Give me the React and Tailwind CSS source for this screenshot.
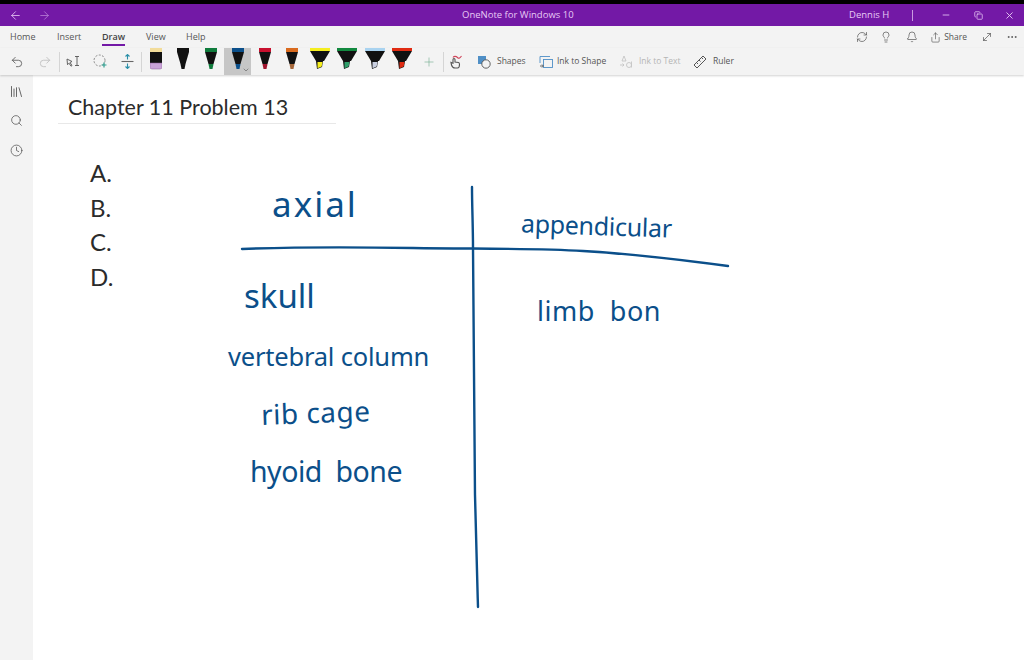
import {
  ArrowLeft, ArrowRight, Bell, Clock, Lightbulb, Library, Minus, MoreHorizontal,
  MoveDiagonal, Plus, Redo2, RefreshCw, Search, Undo2, X, Copy, ChevronDown, Share,
} from 'lucide-react'

const tabs = [
  { name: 'Home', className: 'w-[57px] pl-[10px]' },
  { name: 'Insert', className: 'w-[45px]' },
  { name: 'Draw', className: 'w-[44px]', active: true },
  { name: 'View', className: 'w-[40px]' },
  { name: 'Help', className: 'w-[40px]' },
]

const pens = [
  { top: '#f2dc9a', tip: '#c9a3d8', w: 'w-[27px]', felt: true },
  { top: '#111111', tip: '#111111', w: 'w-[28px]' },
  { top: '#0f7b3c', tip: '#0f7b3c', w: 'w-[27px]' },
  { top: '#0b4f8a', tip: '#0b4f8a', w: 'w-[27px]', selected: true },
  { top: '#c8102e', tip: '#a0152e', w: 'w-[27px]' },
  { top: '#d96a1e', tip: '#a5673a', w: 'w-[28px]' },
]

const markers = [
  { top: '#f5ee1f', tip: '#f5ee1f' },
  { top: '#12893f', tip: '#2f9e6a' },
  { top: '#a9d3f0', tip: '#c9cfe0' },
  { top: '#e02b12', tip: '#e02b12' },
]

// handwritten words on the page canvas, coordinates are relative to the page
const ink = [
  { text: 'axial', className: 'left-[239px] top-[111px] text-[35px] tracking-[2px]' },
  { text: 'appendicular', className: 'left-[488px] top-[138px] text-[25px] -tracking-[0.3px] rotate-2' },
  { text: 'limb  bon', className: 'left-[504px] top-[222px] text-[27px] tracking-[0.5px]' },
  { text: 'skull', className: 'left-[211px] top-[204px] text-[33px]' },
  { text: 'vertebral column', className: 'left-[195px] top-[269px] text-[25.500px] -tracking-[0.2px]' },
  { text: 'rib cage', className: 'left-[228px] top-[323px] text-[28px] tracking-[0.5px] -rotate-2' },
  { text: 'hyoid  bone', className: 'left-[217px] top-[382px] text-[28.500px] -tracking-[0.5px]' },
]

function Pen({ top, tip, felt }) {
  if (felt) {
    return (
      <svg width="12" height="22" viewBox="0 0 12 22">
        <rect x="0" y="0" width="12" height="4" fill={top} />
        <rect x="0" y="4" width="12" height="11" fill="#111" />
        <path d="M0 15h12v4a2 2 0 0 1-2 2H2a2 2 0 0 1-2-2z" fill={tip} stroke="#8a5f9a" strokeWidth="0.5" />
      </svg>
    )
  }
  return (
    <svg width="12" height="22" viewBox="0 0 12 22">
      <rect x="0" y="0" width="12" height="4" fill={top} />
      <path d="M0 4h12L8.500 16h-5z" fill="#111" />
      <path d="M3.500 16h5L7.500 21h-3z" fill={tip} />
    </svg>
  )
}

function Marker({ top, tip }) {
  return (
    <svg width="20" height="22" viewBox="0 0 20 22">
      <rect x="0" y="0" width="20" height="3" fill={top} />
      <path d="M0 3h20l-6 10H6z" fill="#111" />
      <path d="M6 13h7l-1 6-5 2z" fill="#111" />
      <path d="M7.500 14h5l-.8 4.500-4.200 1.800z" fill={tip} />
    </svg>
  )
}

function ToolLabel({ children, className = '' }) {
  return <span className={`text-[8.500px] ${className}`}>{children}</span>
}

export default function App() {
  return (
    <div className="w-[1024px] h-[660px] overflow-hidden flex flex-col bg-white text-[#333] font-['Open_Sans',sans-serif]">
      <div className="h-[4px] bg-black shrink-0" />

      {/* title bar */}
      <div className="h-[22px] shrink-0 flex items-center bg-[#7319a6] text-[#e8c9f5] text-[9.500px]">
        <div className="w-[30px] flex justify-center"><ArrowLeft size={13} strokeWidth={1.5} /></div>
        <div className="w-[29px] flex justify-center text-[#b77fd6]"><ArrowRight size={13} strokeWidth={1.5} /></div>
        <span className="ml-[403px] w-[387px]">OneNote for Windows 10</span>
        <span className="w-[63px]">Dennis H</span>
        <span className="w-px h-[11px] bg-[#c99be0]" />
        <div className="ml-[25px] w-[16px] flex justify-center"><Minus size={10} strokeWidth={2} /></div>
        <div className="ml-[16px] w-[16px] flex justify-center"><Copy size={9} strokeWidth={2} /></div>
        <div className="ml-[15px] w-[16px] flex justify-center"><X size={11} strokeWidth={2} /></div>
      </div>

      {/* ribbon tabs */}
      <div className="h-[22px] shrink-0 flex items-center bg-[#f3f3f3] text-[#555] text-[9px]">
        {tabs.map(tab => (
          <div key={tab.name} className={`${tab.className} h-full flex items-center`}>
            <span className={tab.active ? 'relative font-semibold text-[#444]' : ''}>
              {tab.name}
              {tab.active && <span className="absolute left-0 right-0 top-[14px] h-[2px] bg-[#7319a6]" />}
            </span>
          </div>
        ))}
        <div className="ml-auto flex items-center text-[#555]">
          <RefreshCw size={12} strokeWidth={1.4} />
          <Lightbulb size={12} strokeWidth={1.4} className="ml-[12px]" />
          <Bell size={12} strokeWidth={1.4} className="ml-[14px]" />
          <Share size={11} strokeWidth={1.4} className="ml-[12px]" />
          <span className="ml-[3px] text-[8.500px]">Share</span>
          <MoveDiagonal size={12} strokeWidth={1.4} className="ml-[14px]" />
          <MoreHorizontal size={12} strokeWidth={1.8} className="ml-[13px] mr-[6px]" />
        </div>
      </div>

      {/* draw toolbar */}
      <div className="h-[27px] shrink-0 relative z-10 flex items-center bg-[#f3f3f3] text-[#555] shadow-[0_1px_2px_rgba(0,0,0,0.18)] pl-[3px]">
        <div className="w-[28px] flex justify-center"><Undo2 size={14} strokeWidth={1.4} /></div>
        <div className="w-[28px] flex justify-center text-[#bbb]"><Redo2 size={14} strokeWidth={1.4} /></div>
        <span className="w-px h-[20px] bg-[#d5d5d5]" />
        <div className="w-[27px] flex justify-center">
          <svg width="15" height="13" viewBox="0 0 15 13" fill="none" stroke="#555" strokeWidth="0.9">
            <path d="M1 4l5 2.500-2 1 2 3-1 .7-2-3-1.500 1.500z" />
            <path d="M9 1.500h4M11 1.500v9M9 10.500h4" />
          </svg>
        </div>
        <div className="w-[27px] flex justify-center">
          <svg width="15" height="15" viewBox="0 0 15 15" fill="none">
            <circle cx="6.500" cy="6.500" r="5.500" stroke="#888" strokeWidth="1" strokeDasharray="2 1.500" />
            <path d="M11 8.500v5M8.500 11h5" stroke="#2f9e8f" strokeWidth="1.200" />
          </svg>
        </div>
        <div className="w-[27px] flex justify-center">
          <svg width="13" height="15" viewBox="0 0 13 15" fill="none" strokeWidth="1.100">
            <path d="M0.500 7.500h12" stroke="#666" />
            <path d="M6.500 0.500v5M4.500 2.500l2-2 2 2M6.500 9.500v5M4.500 12.500l2 2 2-2" stroke="#2a8fa8" />
          </svg>
        </div>
        <span className="w-px h-[20px] bg-[#d5d5d5]" />
        {pens.map((pen, i) => (
          <div key={i} className={`${pen.w} h-[27px] relative flex justify-center ${pen.selected ? 'bg-[#c6c6c6]' : ''}`}>
            <Pen {...pen} />
            {pen.selected && <ChevronDown size={8} strokeWidth={1.5} className="absolute right-[1px] bottom-[1px] text-[#444]" />}
          </div>
        ))}
        {markers.map((marker, i) => (
          <div key={i} className="w-[27.500px] h-[27px] flex justify-center">
            <Marker {...marker} />
          </div>
        ))}
        <div className="w-[25px] flex justify-center text-[#6aa88a]"><Plus size={14} strokeWidth={1} /></div>
        <span className="ml-[2px] w-px h-[20px] bg-[#d5d5d5]" />
        <div className="ml-[4px] w-[16px] flex justify-center">
          <svg width="14" height="14" viewBox="0 0 14 14" fill="none" strokeWidth="1.100">
            <path d="M6 13c-2 0-3-1.500-3.500-3L2 7.500l2 .8V4.500a1 1 0 0 1 2 0V7l3.500.5c1 .2 1 1 1 2 0 2-.8 3.500-2 3.500z" stroke="#555" />
            <path d="M4 2.500C5 1 7 1 8.500 2.500S11 3 12.500 1" stroke="#d0455a" />
          </svg>
        </div>
        <div className="ml-[13px] flex items-center w-[62px]">
          <svg width="14" height="14" viewBox="0 0 14 14" fill="none">
            <rect x="1" y="1" width="8" height="8" fill="#4f8fc6" />
            <circle cx="9" cy="9" r="4.200" fill="#f3f3f3" stroke="#555" strokeWidth="0.9" />
          </svg>
          <ToolLabel className="ml-[6px]">Shapes</ToolLabel>
        </div>
        <div className="flex items-center w-[80px]">
          <svg width="15" height="14" viewBox="0 0 15 14" fill="none" strokeWidth="0.9">
            <path d="M1 8V1.500h10" stroke="#4f8fc6" />
            <rect x="4.500" y="4.500" width="9" height="8" stroke="#4f8fc6" />
            <path d="M1 11h3M3 9.500l1.500 1.500L3 12.500" stroke="#555" />
          </svg>
          <ToolLabel className="ml-[3px]">Ink to Shape</ToolLabel>
        </div>
        <div className="flex items-center w-[74px] text-[#b5b5b5]">
          <svg width="14" height="14" viewBox="0 0 14 14" fill="none" stroke="#c5c5c5" strokeWidth="0.9">
            <path d="M5 1l2 5H3zM1 10h4M3.500 8.500L5 10l-1.500 1.500" />
            <circle cx="10" cy="10" r="2.500" />
            <path d="M12.500 6.500v6" />
          </svg>
          <ToolLabel className="ml-[6px]">Ink to Text</ToolLabel>
        </div>
        <div className="flex items-center">
          <svg width="14" height="14" viewBox="0 0 14 14" fill="none" stroke="#555" strokeWidth="1">
            <path d="M1 10L10 1l3 3-9 9zM3.500 7.500l1.500 1.500M6 5l1.500 1.500M8.500 2.500L10 4" />
          </svg>
          <ToolLabel className="ml-[6px]">Ruler</ToolLabel>
        </div>
      </div>

      <div className="flex-1 flex min-h-0">
        {/* left rail */}
        <div className="w-[33px] shrink-0 bg-[#f3f3f3] flex flex-col items-center pt-[9px] text-[#555]">
          <Library size={15} strokeWidth={1.4} />
          <Search size={13} strokeWidth={1.4} className="mt-[15px]" />
          <Clock size={13} strokeWidth={1.4} className="mt-[17px]" />
        </div>

        {/* page canvas */}
        <div className="flex-1 relative bg-white font-['Lato',sans-serif] text-[#2b2b2b]">
          <div className="ml-[25px] w-[278px] mt-[17px] pl-[10px] h-[32px] border-b border-[#e8e8e8] text-[21.500px] leading-[30px]">
            Chapter 11 Problem 13
          </div>
          <div className="ml-[57px] mt-[32px] text-[24px] leading-[34.700px]">
            <div>A.</div>
            <div>B.</div>
            <div>C.</div>
            <div>D.</div>
          </div>

          <svg className="absolute left-0 top-0 pointer-events-none" width="991" height="584" viewBox="0 0 991 584" fill="none" stroke="#0b4f8a" strokeWidth="2.400" strokeLinecap="round">
            <path d="M439 112C439 131 440 151 440 173C441 260 441 340 442 420C443 470 444 500 445 532" />
            <path d="M209 174C260 172 320 172 380 173C440 174 500 173 550 176C600 179 650 185 695 191" />
          </svg>

          {ink.map(word => (
            <span
              key={word.text}
              className={`absolute whitespace-pre leading-none text-[#0b4f8a] font-['Noto_Sans',sans-serif] ${word.className}`}
            >
              {word.text}
            </span>
          ))}
        </div>
      </div>
    </div>
  )
}
